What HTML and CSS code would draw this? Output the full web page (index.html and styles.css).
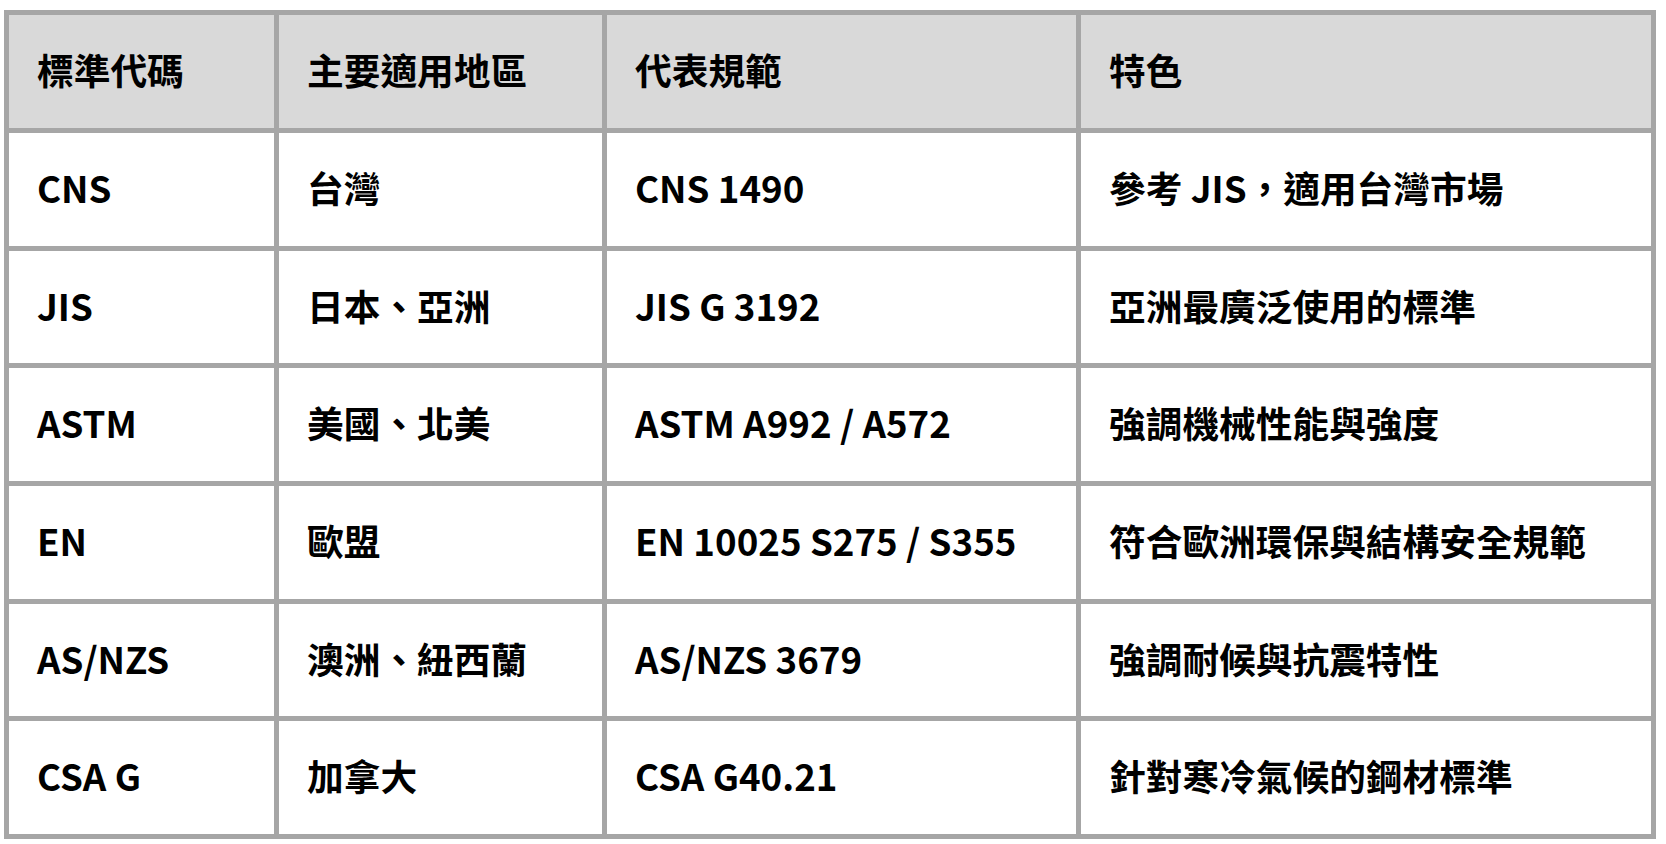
FILE: index.html
```html
<!DOCTYPE html>
<html lang="zh-Hant">
<head>
<meta charset="utf-8">
<title>鋼材標準比較</title>
<link rel="stylesheet" href="styles.css">
</head>
<body>
<table class="std-table">
  <colgroup>
    <col class="c1"><col class="c2"><col class="c3"><col class="c4">
  </colgroup>
  <thead>
    <tr><th>標準代碼</th><th>主要適用地區</th><th>代表規範</th><th>特色</th></tr>
  </thead>
  <tbody>
    <tr><td>CNS</td><td>台灣</td><td>CNS 1490</td><td>參考 JIS，適用台灣市場</td></tr>
    <tr><td>JIS</td><td>日本、亞洲</td><td>JIS G 3192</td><td>亞洲最廣泛使用的標準</td></tr>
    <tr><td>ASTM</td><td>美國、北美</td><td>ASTM A992 / A572</td><td>強調機械性能與強度</td></tr>
    <tr><td>EN</td><td>歐盟</td><td>EN 10025 S275 / S355</td><td>符合歐洲環保與結構安全規範</td></tr>
    <tr><td>AS/NZS</td><td>澳洲、紐西蘭</td><td>AS/NZS 3679</td><td>強調耐候與抗震特性</td></tr>
    <tr><td>CSA G</td><td>加拿大</td><td>CSA G40.21</td><td>針對寒冷氣候的鋼材標準</td></tr>
  </tbody>
</table>
</body>
</html>
```

FILE: styles.css
```css
html, body {
  margin: 0;
  padding: 0;
  background: #ffffff;
}

body {
  font-family: "Noto Sans CJK TC", "Noto Sans", sans-serif;
  color: #000000;
}

.std-table {
  margin: 10px 0 0 4px;
  border-collapse: separate;
  border-spacing: 5px;
  background: #a6a6a6;
  table-layout: fixed;
  width: 1652px;
}

.c1 { width: 265px; }
.c2 { width: 323px; }
.c3 { width: 469px; }
.c4 { width: 570px; }

.std-table th,
.std-table td {
  padding: 0 0 5px 28px;
  text-align: left;
  vertical-align: middle;
  font-size: 36.7px;
  font-weight: 700;
  line-height: 1.2;
  white-space: nowrap;
}

.std-table th {
  background: #d9d9d9;
  height: 108px;
}

.std-table td {
  background: #ffffff;
  height: 107.7px;
}
```
